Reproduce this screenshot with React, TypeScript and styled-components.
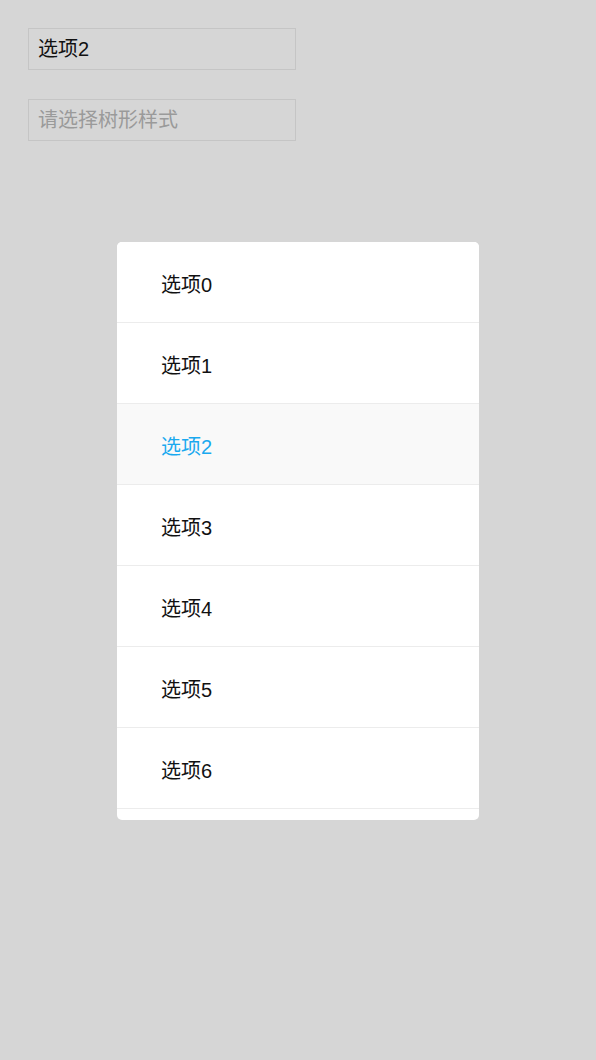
import styled, { createGlobalStyle } from "styled-components";

const GlobalStyle = createGlobalStyle`
  html, body {
    margin: 0;
    padding: 0;
    background: #d6d6d6;
    font-family: "Liberation Sans", "Noto Sans CJK SC", sans-serif;
  }
`;

const Page = styled.div`
  padding: 28px;
  display: flex;
  flex-direction: column;
  gap: 29px;
`;

const Field = styled.div<{ $placeholder?: boolean }>`
  box-sizing: border-box;
  width: 268px;
  height: 42px;
  border: 1px solid #c5c5c5;
  padding: 0 9px 4px;
  display: flex;
  align-items: center;
  font-size: 20px;
  color: ${(p) => (p.$placeholder ? "#9a9a9a" : "#111")};
`;

const Overlay = styled.div`
  position: fixed;
  inset: 0;
  padding-top: 2px;
  display: flex;
  align-items: center;
  justify-content: center;
`;

const Sheet = styled.div`
  width: 362px;
  background: #fff;
  border-radius: 5px;
  padding-bottom: 11px;
  overflow: hidden;
`;

const Option = styled.div<{ $active?: boolean }>`
  box-sizing: border-box;
  height: 81px;
  border-bottom: 1px solid #ececec;
  display: flex;
  align-items: center;
  padding: 2px 0 0 44px;
  font-size: 20px;
  background: ${(p) => (p.$active ? "#f9f9f9" : "#fff")};
  color: ${(p) => (p.$active ? "#1aa9ef" : "#111")};
`;

const options = ["选项0", "选项1", "选项2", "选项3", "选项4", "选项5", "选项6"];

export default function App() {
  return (
    <>
      <GlobalStyle />
      <Page>
        <Field>选项2</Field>
        <Field $placeholder>请选择树形样式</Field>
      </Page>
      <Overlay>
        <Sheet>
          {options.map((o) => (
            <Option key={o} $active={o === "选项2"}>
              {o}
            </Option>
          ))}
        </Sheet>
      </Overlay>
    </>
  );
}
